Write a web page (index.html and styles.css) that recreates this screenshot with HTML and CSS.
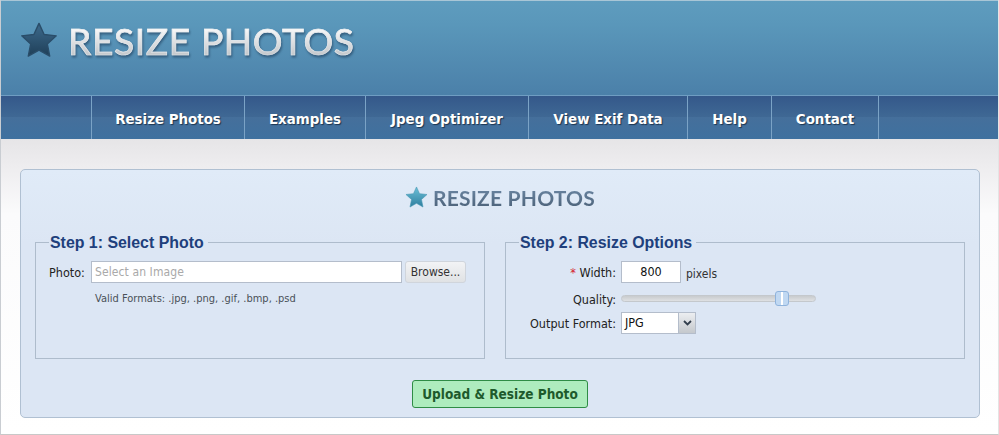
FILE: index.html
```html
<!DOCTYPE html>
<html lang="en">
<head>
<meta charset="utf-8">
<title>Resize Photos</title>
<link rel="stylesheet" href="styles.css">
</head>
<body>
<div class="page">
  <header class="masthead">
    <svg class="logo-star" viewBox="0 0 40 38" width="38" height="36" aria-hidden="true">
      <defs><linearGradient id="starA" x1="0" y1="0" x2="0" y2="1"><stop offset="0" stop-color="#3d6a8c"/><stop offset="1" stop-color="#1f3f58"/></linearGradient></defs>
      <path d="M20 1.5 25.4 13.2 38.2 14.6 28.8 23.3 31.3 36 20 29.7 8.7 36 11.2 23.3 1.8 14.6 14.6 13.2Z" fill="url(#starA)" stroke="#2a4d69" stroke-width="1.5" stroke-linejoin="round"/>
    </svg>
    <div class="logo-text">RESIZE PHOTOS</div>
  </header>
  <nav class="nav">
    <a class="nav-item nav-w1">Resize Photos</a>
    <a class="nav-item nav-w2">Examples</a>
    <a class="nav-item nav-w3">Jpeg Optimizer</a>
    <a class="nav-item nav-w4">View Exif Data</a>
    <a class="nav-item nav-w5">Help</a>
    <a class="nav-item nav-w6">Contact</a>
  </nav>
  <main class="content">
    <form class="panel">
      <div class="panel-title">
        <svg viewBox="0 0 24 23" width="23" height="22" aria-hidden="true">
          <defs><linearGradient id="starB" x1="0" y1="0" x2="0" y2="1"><stop offset="0" stop-color="#6cc0d8"/><stop offset="1" stop-color="#2f7f9f"/></linearGradient></defs>
          <path d="M12 1 15.2 8 23 8.9 17.2 14.1 18.8 22 12 18.1 5.200 22 6.800 14.100 1 8.900 8.800 8Z" fill="url(#starB)" stroke="#4596b2" stroke-width=".6" stroke-linejoin="round"/>
        </svg>
        <span class="panel-title-text">RESIZE PHOTOS</span>
      </div>
      <div class="steps">
        <fieldset class="step">
          <legend>Step 1: Select Photo</legend>
          <div class="file-row">
            <span class="file-label">Photo:</span>
            <div class="file-input">Select an Image</div>
            <div class="browse">Browse...</div>
          </div>
          <p class="hint">Valid Formats: .jpg, .png, .gif, .bmp, .psd</p>
        </fieldset>
        <fieldset class="step">
          <legend>Step 2: Resize Options</legend>
          <div class="opt-row opt-width">
            <span class="opt-label"><span class="req">*</span> Width:</span>
            <div class="num-input">800</div>
            <span class="unit">pixels</span>
          </div>
          <div class="opt-row opt-quality">
            <span class="opt-label">Quality:</span>
            <div class="slider"><span class="thumb"></span></div>
          </div>
          <div class="opt-row opt-format">
            <span class="opt-label">Output Format:</span>
            <div class="select"><span class="select-value">JPG</span><span class="select-arrow"><svg viewBox="0 0 9 6" width="9" height="6" aria-hidden="true"><path d="M1 1 4.500 4.500 8 1" fill="none" stroke="#333f4d" stroke-width="1.800"/></svg></span></div>
          </div>
        </fieldset>
      </div>
      <div class="actions"><div class="submit">Upload &amp; Resize Photo</div></div>
    </form>
  </main>
</div>
</body>
</html>
```
FILE: styles.css
```css
* { box-sizing: border-box; }
html, body { margin: 0; padding: 0; }
body { background: #fff; font-family: "DejaVu Sans", sans-serif; }
.page { width: 999px; height: 435px; overflow: hidden; border-left: 1px solid #c9cdd2; border-right: 1px solid #e4e4e4; border-bottom: 1px solid #c8c8c8; background: #fff; }
.masthead { height: 95px; margin-left: -1px; padding: 21px 0 0 20px; display: flex; align-items: flex-start; gap: 10px; background: linear-gradient(#5e9cbe 0, #5a97ba 25%, #4b80a9 100%); border-top: 1px solid #a9c6d6; }
.logo-star { flex: none; }
.logo-text { font-family: Lato, sans-serif; font-weight: 400; font-size: 37.2px; line-height: 38px; letter-spacing: .6px; background: linear-gradient(#fafafa 15%, #c5c9cd 85%); -webkit-background-clip: text; background-clip: text; color: transparent; filter: drop-shadow(1px 2px 1px rgba(30,60,90,.6)); -webkit-text-stroke: .7px rgba(235,238,240,.75); }
.nav { height: 44px; margin-left: -1px; padding-left: 91px; display: flex; border-top: 1px solid #6f9dc2; background: linear-gradient(#34588a 0, #3f6894 48%, #456f9b 49%, #3f719f 100%); }
.nav-item { display: flex; justify-content: center; align-items: center; height: 43px; padding-top: 3px; border-left: 1px solid #7ba3c6; color: #fff; font-family: "DejaVu Sans Condensed", "DejaVu Sans", sans-serif; font-weight: 700; font-size: 14.9px; text-shadow: 1px 1px 1px #1d3550; }
.nav-w1 { width: 153px; }
.nav-w2 { width: 121px; }
.nav-w3 { width: 163px; }
.nav-w4 { width: 159px; }
.nav-w5 { width: 84px; }
.nav-w6 { width: 108px; border-right: 1px solid #7ba3c6; }
.content { height: 295px; padding: 30px 18px 0 19px; background: linear-gradient(#e6e5e7 0, #eeedef 28px, #fbfbfc 75px, #fff 100%); }
.panel { height: 249px; background: linear-gradient(#e0ebf8, #dce6f4 30%, #dce6f4); border: 1px solid #b0c0d2; border-radius: 5px; padding: 0 14px; }
.panel-title { height: 61px; padding: 16px 0 0 0; display: flex; justify-content: center; align-items: flex-start; gap: 5px; }
.panel-title-text { font-family: Lato, sans-serif; font-weight: 700; font-size: 21px; line-height: 24px; letter-spacing: .2px; background: linear-gradient(#6d89a6, #4a5f76); -webkit-background-clip: text; background-clip: text; color: transparent; }
.steps { display: grid; grid-template-columns: 450px 460px; gap: 20px; }
.step { margin: 0; min-width: 0; height: 128px; padding: 8px 0 0 13px; border: 1px solid #aebccc; }
.step legend { padding: 2px 4px 0 1px; margin-left: 0; font-family: "Liberation Sans", sans-serif; font-weight: 700; font-size: 15.9px; line-height: 20px; color: #203f7c; }
.file-row { display: flex; align-items: center; height: 22px; font-size: 12px; font-family: "DejaVu Sans Condensed", sans-serif; }
.file-label { width: 42px; color: #222; font-size: 12.5px; }
.file-input { width: 311px; height: 22px; padding: 0 3px; line-height: 20px; background: #fff; border: 1px solid #b4bdcb; color: #a9a9a9; font-size: 12px; letter-spacing: .1px; }
.browse { width: 61px; height: 22px; margin-left: 3px; line-height: 20px; text-align: center; background: linear-gradient(#f2f3f5, #e0e2e4); border: 1px solid #d0d5dc; border-radius: 3px; color: #333; }
.hint { margin: 9px 0 0 46px; font-family: "DejaVu Sans Condensed", sans-serif; font-size: 11px; line-height: 14px; color: #4a5158; }
.opt-row { display: flex; align-items: center; font-family: "DejaVu Sans Condensed", sans-serif; font-size: 12.5px; color: #222; }
.opt-width { height: 22px; }
.opt-quality { height: 22px; margin-top: 5px; }
.opt-format { height: 22px; margin-top: 2px; }
.opt-label { width: 98px; text-align: right; margin-right: 5px; margin-left: -1px; }
.req { color: #d5222c; }
.num-input { width: 60px; height: 22px; line-height: 20px; text-align: center; background: #fff; border: 1px solid #b4bdcb; color: #111; }
.unit { margin: 3px 0 0 5px; color: #333; font-size: 12px; }
.slider { position: relative; width: 195px; height: 7px; margin-top: -1px; background: linear-gradient(#c8cbce, #dfe1e3); border: 1px solid #c4c8cc; border-radius: 4px; }
.thumb { position: absolute; left: 153px; top: -5px; width: 14px; height: 15px; border-radius: 3px; border: 1px solid #8fb3dc; background: linear-gradient(90deg, #c0d8f2 0, #c0d8f2 45%, #fff 45%, #fff 55%, #c0d8f2 55%); }
.select { display: flex; width: 75px; height: 22px; background: #fff; border: 1px solid #b4bdcb; color: #111; }
.select-value { flex: 1; padding-left: 3px; line-height: 20px; }
.select-arrow { width: 17px; display: flex; justify-content: center; align-items: center; background: linear-gradient(#eceef1, #c4c8cc); border-left: 1px solid #b4bdcb; }
.actions { display: flex; justify-content: center; padding: 21px 0 0 0; }
.submit { width: 176px; height: 28px; line-height: 26px; text-align: center; background: #aeecbe; border: 1px solid #2f8c46; border-radius: 3px; color: #1e5a2c; font-family: "DejaVu Sans Condensed", sans-serif; font-weight: 700; font-size: 13.5px; }
```
